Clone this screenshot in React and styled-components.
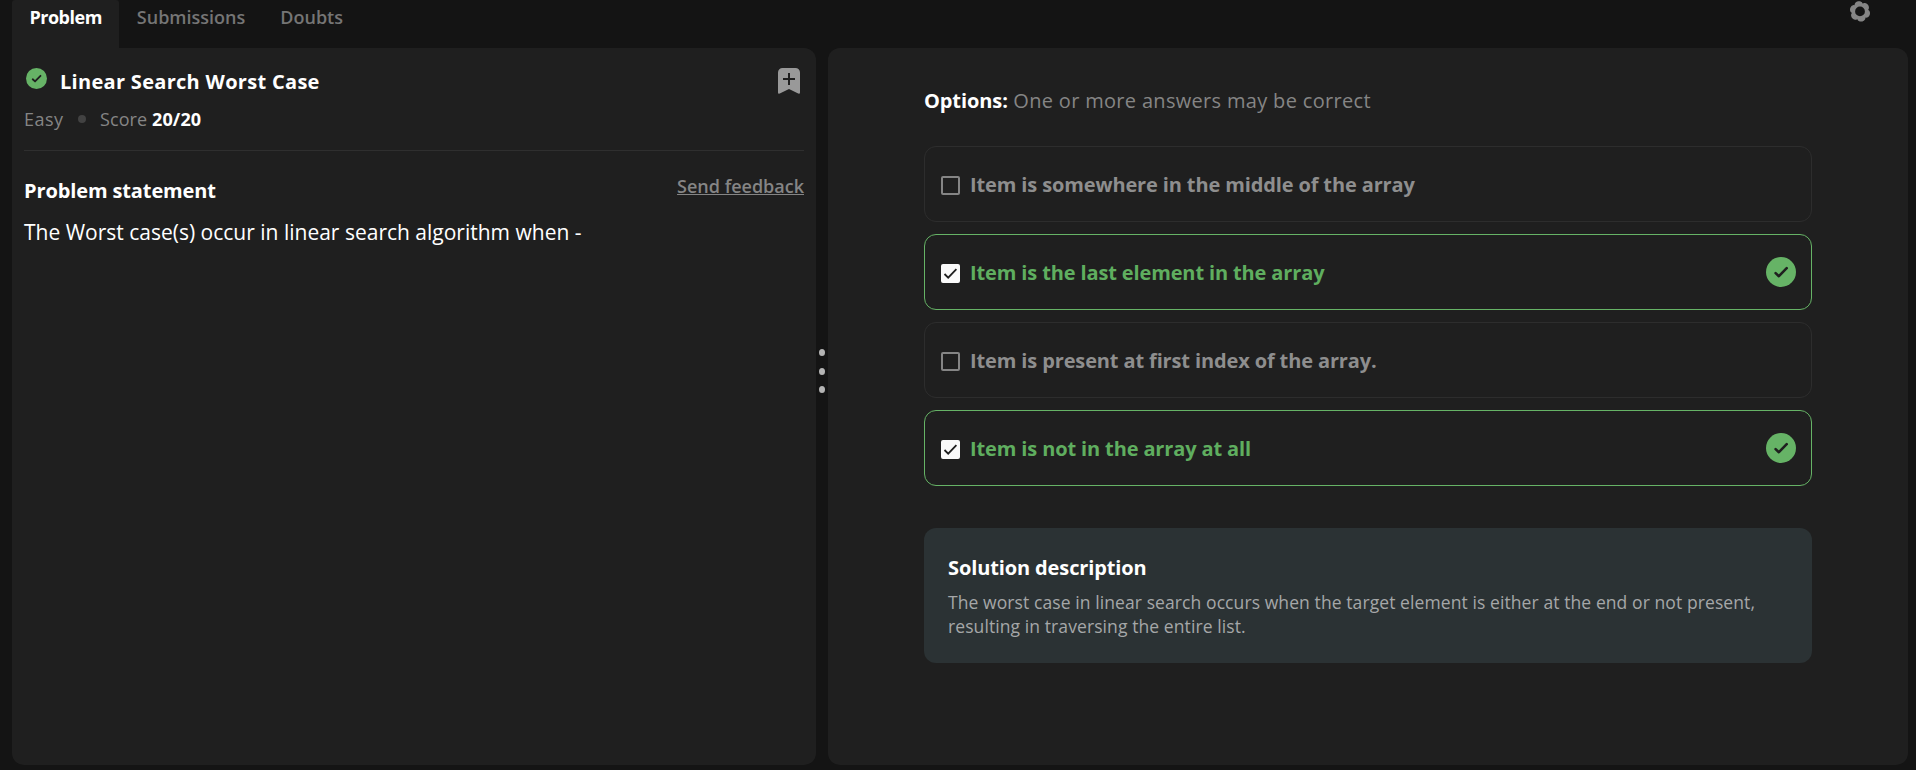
import React from 'react';
import styled, { createGlobalStyle, css } from 'styled-components';

const GlobalStyle = createGlobalStyle`
  *, *::before, *::after { box-sizing: border-box; }
  body {
    margin: 0;
    background: #141414;
    color: #fff;
    font-family: 'Open Sans', 'Noto Sans', sans-serif;
    overflow: hidden;
  }
  h1, h2, p, ul { margin: 0; padding: 0; }
  svg { display: block; flex: none; }
`;

const Page = styled.div`
  display: flex;
  flex-direction: column;
  height: 100vh;
  padding: 0 8px 5px 12px;
`;

const TopBar = styled.header`
  display: flex;
  justify-content: space-between;
  align-items: flex-start;
  height: 48px;
  flex: none;
`;

const Tabs = styled.nav`
  display: flex;
  height: 100%;
`;

const Tab = styled.button`
  height: 48px;
  padding: 0 17.5px 14px;
  border: 0;
  border-radius: 3px 3px 0 0;
  background: ${(p) => (p.$active ? '#1f1f1f' : 'transparent')};
  color: ${(p) => (p.$active ? '#fff' : '#757575')};
  font: ${(p) => (p.$active ? 700 : 600)} 18px/34px 'Open Sans', sans-serif;
  letter-spacing: ${(p) => (p.$active ? '-0.5px' : '0')};
`;

const SettingsButton = styled.button`
  margin: 0 37px 0 0;
  padding: 0;
  border: 0;
  background: none;
`;

const Workspace = styled.main`
  display: grid;
  grid-template-columns: 804px 12px 1fr;
  flex: 1;
  min-height: 0;
`;

const Panel = styled.section`
  background: #1f1f1f;
  border-radius: 12px;
`;

const ProblemPanel = styled(Panel)`
  padding: 20px 12px 0;
  border-top-left-radius: 0;
`;

const AnswerPanel = styled(Panel)`
  padding: 39px 96px 0;
`;

const TitleRow = styled.div`
  display: flex;
  align-items: flex-start;
  height: 28px;
  padding: 0 4px 0 2px;
`;

const Title = styled.h1`
  flex: 1;
  margin-left: 13px;
  font-size: 20px;
  font-weight: 700;
  line-height: 28px;
  letter-spacing: 0.3px;
`;

const BookmarkButton = styled.button`
  padding: 0;
  border: 0;
  background: none;
`;

const Meta = styled.div`
  display: flex;
  align-items: center;
  margin-top: 11px;
  padding-bottom: 19px;
  border-bottom: 1px solid #2f2f2f;
  color: #858585;
  font-size: 18px;
  line-height: 24px;
`;

const Difficulty = styled.span`
  width: 40px;
  letter-spacing: 0.5px;
`;

const Dot = styled.span`
  width: 8px;
  height: 8px;
  margin: 0 14px;
  border-radius: 50%;
  background: #424242;
`;

const Score = styled.span`
  letter-spacing: 0.1px;
  strong {
    color: #fff;
    font-weight: 700;
  }
`;

const StatementRow = styled.div`
  display: flex;
  justify-content: space-between;
  align-items: flex-start;
  margin-top: 23px;
`;

const SectionTitle = styled.h2`
  font-size: 20px;
  font-weight: 700;
  line-height: 28px;
  letter-spacing: -0.12px;
`;

const StatementTitle = styled(SectionTitle)`
  margin-top: 3px;
`;

const FeedbackLink = styled.a`
  color: #858585;
  font-size: 18px;
  font-weight: 600;
  line-height: 24px;
  text-decoration: underline;
  text-decoration-thickness: 1px;
  text-underline-offset: 1px;
  text-decoration-skip-ink: none;
`;

const Statement = styled.p`
  margin-top: 13px;
  font-size: 21px;
  line-height: 28px;
`;

const Divider = styled.div`
  display: flex;
  flex-direction: column;
  align-items: center;
  justify-content: center;
  gap: 11.3px;
  padding-bottom: 71px;

  i {
    width: 6px;
    height: 7px;
    border-radius: 50%;
    background: #b4b4b4;
  }
`;

const Hint = styled.p`
  color: #858585;
  font-size: 20px;
  line-height: 28px;
  letter-spacing: 0.32px;
  strong {
    color: #fff;
    font-weight: 700;
    letter-spacing: -0.1px;
  }
`;

const OptionList = styled.ul`
  display: grid;
  gap: 12px;
  margin-top: 31px;
  list-style: none;
`;

const Option = styled.li`
  display: flex;
  align-items: center;
  height: 76px;
  padding: 0 15px 0 16px;
  border: 1px solid ${(p) => (p.$correct ? '#66b366' : '#2d2d2d')};
  border-radius: 12px;
  color: ${(p) => (p.$correct ? '#5fae5f' : '#8e8e8e')};
  font-size: 20px;
  font-weight: 700;
  line-height: 28px;
  letter-spacing: -0.13px;
`;

const OptionLabel = styled.span`
  flex: 1;
  margin-left: 10px;
  padding-top: 2px;
`;

const Checkbox = styled.span`
  display: grid;
  place-items: center;
  width: 19px;
  height: 19px;
  margin-top: 3px;
  border: 2px solid #858585;
  border-radius: 2px;
  ${(p) =>
    p.$checked &&
    css`
      border-color: #fafafa;
      background: #fafafa;
    `}
`;

const Solution = styled.article`
  margin-top: 42px;
  padding: 26px 24px 25px;
  border-radius: 12px;
  background: #2b3234;
`;

const SolutionText = styled.p`
  margin-top: 8px;
  color: #a5a7a8;
  font-size: 17.5px;
  line-height: 24px;
  letter-spacing: 0.09px;
`;

const CheckCircle = ({ size }) => (
  <svg width={size} height={size} viewBox="0 0 30 30" fill="none">
    <circle cx="15" cy="15" r="15" fill="#66b366" />
    <path d="M9.6 16.1 12.9 19.2 20.7 11.2" stroke="#1f1f1f" strokeWidth="2.6" strokeLinecap="round" strokeLinejoin="round" />
  </svg>
);

const Bookmark = () => (
  <svg width="22" height="26" viewBox="0 0 22 26">
    <path d="M4.500 0h13A4.500 4.500 0 0 1 22 4.500V24.500C22 25.600 21 26 20.200 25.600L11 21 1.800 25.600C1 26 0 25.600 0 24.500V4.500A4.500 4.500 0 0 1 4.500 0Z" fill="#999" />
    <path d="M11 5v12M5 11h12" stroke="#1f1f1f" strokeWidth="2" />
  </svg>
);

/* Six rounded lobes around the hub */
const gearOutline = Array.from({ length: 180 }, (_, i) => {
  const angle = (i * Math.PI) / 90;
  const radius = 7.9 + 2.4 * Math.abs(Math.cos(3 * (angle + (101 * Math.PI) / 180))) ** 0.55;
  return `${(11 + radius * Math.cos(angle)).toFixed(2)} ${(11.4 + radius * Math.sin(angle)).toFixed(2)}`;
}).join('L');

const Gear = () => (
  <svg width="22" height="23" viewBox="0 0 22 23">
    <path
      fillRule="evenodd"
      fill="#858585"
      d={`M${gearOutline}ZM11 6.500a4.900 4.900 0 1 0 0 9.800a4.900 4.900 0 1 0 0-9.800Z`}
    />
  </svg>
);

const options = [
  { label: 'Item is somewhere in the middle of the array', correct: false },
  { label: 'Item is the last element in the array', correct: true },
  { label: 'Item is present at first index of the array.', correct: false },
  { label: 'Item is not in the array at all', correct: true },
];

export default function App() {
  return (
    <>
      <GlobalStyle />
      <Page>
        <TopBar>
          <Tabs>
            <Tab $active>Problem</Tab>
            <Tab>Submissions</Tab>
            <Tab>Doubts</Tab>
          </Tabs>
          <SettingsButton aria-label="Settings">
            <Gear />
          </SettingsButton>
        </TopBar>
        <Workspace>
          <ProblemPanel>
            <TitleRow>
              <CheckCircle size={21} />
              <Title>Linear Search Worst Case</Title>
              <BookmarkButton aria-label="Bookmark">
                <Bookmark />
              </BookmarkButton>
            </TitleRow>
            <Meta>
              <Difficulty>Easy</Difficulty>
              <Dot />
              <Score>
                Score <strong>20/20</strong>
              </Score>
            </Meta>
            <StatementRow>
              <StatementTitle>Problem statement</StatementTitle>
              <FeedbackLink>Send feedback</FeedbackLink>
            </StatementRow>
            <Statement>The Worst case(s) occur in linear search algorithm when -</Statement>
          </ProblemPanel>
          <Divider>
            <i />
            <i />
            <i />
          </Divider>
          <AnswerPanel>
            <Hint>
              <strong>Options:</strong> One or more answers may be correct
            </Hint>
            <OptionList>
              {options.map(({ label, correct }) => (
                <Option key={label} $correct={correct}>
                  <Checkbox $checked={correct}>
                    {correct && (
                      <svg width="15" height="15" viewBox="0 0 15 15" fill="none">
                        <path d="M1.500 8 5.200 11.700 13.400 3.200" stroke="#1f1f1f" strokeWidth="1.800" />
                      </svg>
                    )}
                  </Checkbox>
                  <OptionLabel>{label}</OptionLabel>
                  {correct && <CheckCircle size={30} />}
                </Option>
              ))}
            </OptionList>
            <Solution>
              <SectionTitle>Solution description</SectionTitle>
              <SolutionText>
                The worst case in linear search occurs when the target element is either at the end or not present,
                resulting in traversing the entire list.
              </SolutionText>
            </Solution>
          </AnswerPanel>
        </Workspace>
      </Page>
    </>
  );
}
